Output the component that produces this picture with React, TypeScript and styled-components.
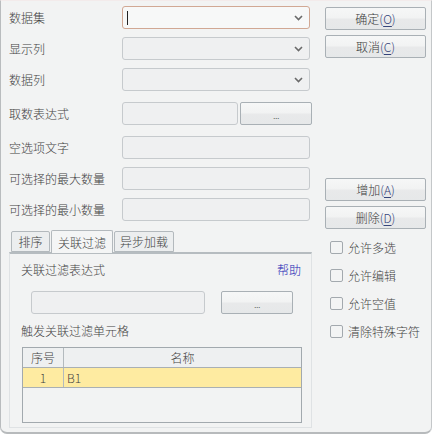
import React from "react";
import styled, { createGlobalStyle, css } from "styled-components";

const Global = createGlobalStyle`
  html, body { margin: 0; padding: 0; background: #ffffff; }
  body { font-family: "Noto Sans CJK SC", "Noto Sans", sans-serif; }
  * { box-sizing: border-box; }
`;

const Window = styled.div`
  width: 432px;
  height: 434px;
  background: #f2f3f3;
  border-left: 1px solid #b9bcbe;
  border-right: 1px solid #c4c7c9;
  border-bottom: 2px solid #b7babc;
  border-top: 1px solid #f3ebeb;
  border-radius: 0 0 7px 7px;
  display: grid;
  grid-template-columns: 311px 119px;
  font-size: 12px;
  font-weight: 300;
  color: #424242;
  overflow: hidden;
`;

const LeftCol = styled.div`
  width: 311px;
  padding-left: 8px;
  display: flex;
  flex-direction: column;
`;

const Row = styled.div<{ $top: number }>`
  display: grid;
  grid-template-columns: 113px 188px;
  align-items: center;
  height: 23px;
  margin-top: ${(p) => p.$top}px;
`;

const Label = styled.span`
  line-height: 23px;
  white-space: nowrap;
`;

const fieldBase = css`
  height: 23px;
  border: 1px solid #c6cacd;
  border-radius: 3px;
  background: #eff0f1;
`;

const SelectBox = styled.div<{ $focus?: boolean }>`
  ${fieldBase}
  position: relative;
  display: flex;
  align-items: center;
  justify-content: flex-end;
  padding-right: 6px;
  ${(p) =>
    p.$focus &&
    css`
      border-color: #d1a894;
      background: #f7f8f8;
    `}
`;

const Caret = styled.span`
  position: absolute;
  left: 4px;
  top: 4px;
  width: 1px;
  height: 14px;
  background: #222;
`;

const TextBox = styled.div<{ $w?: number }>`
  ${fieldBase}
  width: ${(p) => (p.$w ? `${p.$w}px` : "100%")};
  flex-shrink: 0;
`;

const SplitField = styled.div`
  display: flex;
  align-items: center;
  gap: 2px;
`;

const Btn = styled.div<{ $w: number }>`
  width: ${(p) => p.$w}px;
  height: 23px;
  flex-shrink: 0;
  border: 1px solid #a9b0b5;
  border-radius: 2px;
  background: linear-gradient(#f6f7f7 0%, #f2f3f3 45%, #e8e9ea 55%, #e6e8e9 100%);
  display: flex;
  align-items: center;
  justify-content: center;
  font-size: 12px;
  color: #3a3a3a;
  line-height: 1;
`;

const Dots = styled.span`
  font-size: 10px;
  color: #555;
  margin-top: 2px;
  letter-spacing: -0.5px;
`;

const Key = styled.span`
  color: #36457a;
`;

const U = styled.span`
  text-decoration: underline;
  text-underline-offset: 2px;
`;

const Tabs = styled.div`
  display: flex;
  align-items: flex-end;
  margin-top: 9px;
  padding-left: 2px;
  height: 22px;
  position: relative;
  z-index: 1;
`;

const Tab = styled.div<{ $active?: boolean; $w: number }>`
  width: ${(p) => p.$w}px;
  height: ${(p) => (p.$active ? 23 : 21)}px;
  margin-right: 1px;
  border: 1px solid #b3b9bd;
  border-bottom: ${(p) => (p.$active ? "none" : "1px solid #b3b9bd")};
  background: ${(p) => (p.$active ? "#f4f5f5" : "#eceeef")};
  display: flex;
  align-items: center;
  justify-content: center;
  font-size: 12px;
  margin-bottom: ${(p) => (p.$active ? "-1px" : "0")};
  border-radius: 2px 2px 0 0;
`;

const Panel = styled.div`
  width: 303px;
  height: 176px;
  border: 1px solid #dfe2e4;
  border-top: 2px solid #b6bcc0;
  padding: 5px 11px 0 11px;
  display: flex;
  flex-direction: column;
`;

const PanelHead = styled.div`
  width: 280px;
  display: flex;
  justify-content: space-between;
  align-items: center;
  height: 20px;
`;

const HelpLink = styled.span`
  color: #2424b4;
`;

const PanelFieldRow = styled.div`
  display: flex;
  align-items: center;
  gap: 16px;
  margin-top: 12px;
  padding-left: 10px;
`;

const SubLabel = styled.div`
  margin-top: 8px;
  height: 18px;
  line-height: 18px;
`;

const Table = styled.div`
  margin-top: 7px;
  margin-left: 1px;
  width: 280px;
  height: 76px;
  border: 1px solid #a2a9ae;
  display: flex;
  flex-direction: column;
  flex-shrink: 0;
`;

const TRow = styled.div<{ $head?: boolean; $sel?: boolean }>`
  display: grid;
  grid-template-columns: 41px 1fr;
  height: 20px;
  border-bottom: 1px solid #a9b0b4;
  background: ${(p) => (p.$head ? "#eef0f1" : p.$sel ? "#feeba1" : "transparent")};
`;

const Cell = styled.div<{ $center?: boolean; $first?: boolean }>`
  display: flex;
  align-items: center;
  justify-content: ${(p) => (p.$center ? "center" : "flex-start")};
  padding-left: ${(p) => (p.$center ? 0 : 3)}px;
  border-right: ${(p) => (p.$first ? "1px solid #b3babe" : "none")};
  font-size: 12px;
`;

const RightCol = styled.div`
  display: flex;
  flex-direction: column;
  padding-left: 13px;
`;

const BtnStack = styled.div<{ $top: number }>`
  display: flex;
  flex-direction: column;
  gap: 5px;
  margin-top: ${(p) => p.$top}px;
`;

const CheckList = styled.div`
  display: flex;
  flex-direction: column;
  gap: 14px;
  margin-top: 11px;
  padding-left: 5px;
`;

const CheckRow = styled.label`
  display: flex;
  align-items: center;
  gap: 5px;
  height: 14px;
  font-size: 12px;
  white-space: nowrap;
`;

const Box = styled.span`
  width: 13px;
  height: 13px;
  border: 1px solid #a3a9ae;
  border-radius: 2px;
  background: #f3f4f4;
`;

const Chevron = () => (
  <svg width="9" height="6" viewBox="0 0 9 6">
    <path d="M1 1 L4.5 4.5 L8 1" fill="none" stroke="#6a6a6a" strokeWidth="1.6" />
  </svg>
);

export default function App() {
  return (
    <>
      <Global />
      <Window>
        <LeftCol>
          <Row $top={5}>
            <Label>数据集</Label>
            <SelectBox $focus>
              <Caret />
              <Chevron />
            </SelectBox>
          </Row>
          <Row $top={8}>
            <Label>显示列</Label>
            <SelectBox>
              <Chevron />
            </SelectBox>
          </Row>
          <Row $top={8}>
            <Label>数据列</Label>
            <SelectBox>
              <Chevron />
            </SelectBox>
          </Row>
          <Row $top={11}>
            <Label>取数表达式</Label>
            <SplitField>
              <TextBox $w={116} />
              <Btn $w={72}>
                <Dots>...</Dots>
              </Btn>
            </SplitField>
          </Row>
          <Row $top={11}>
            <Label>空选项文字</Label>
            <TextBox />
          </Row>
          <Row $top={8}>
            <Label>可选择的最大数量</Label>
            <TextBox />
          </Row>
          <Row $top={8}>
            <Label>可选择的最小数量</Label>
            <TextBox />
          </Row>
          <Tabs>
            <Tab $w={39}>排序</Tab>
            <Tab $w={62} $active>
              关联过滤
            </Tab>
            <Tab $w={60}>异步加载</Tab>
          </Tabs>
          <Panel>
            <PanelHead>
              <span>关联过滤表达式</span>
              <HelpLink>帮助</HelpLink>
            </PanelHead>
            <PanelFieldRow>
              <TextBox $w={174} />
              <Btn $w={72}>
                <Dots>...</Dots>
              </Btn>
            </PanelFieldRow>
            <SubLabel>触发关联过滤单元格</SubLabel>
            <Table>
              <TRow $head>
                <Cell $center $first>
                  序号
                </Cell>
                <Cell $center>名称</Cell>
              </TRow>
              <TRow $sel>
                <Cell $center $first>
                  1
                </Cell>
                <Cell>B1</Cell>
              </TRow>
            </Table>
          </Panel>
        </LeftCol>
        <RightCol>
          <BtnStack $top={6}>
            <Btn $w={101}>
              确定
              <Key>
                (<U>O</U>)
              </Key>
            </Btn>
            <Btn $w={101}>
              取消
              <Key>
                (<U>C</U>)
              </Key>
            </Btn>
          </BtnStack>
          <BtnStack $top={120}>
            <Btn $w={101}>
              增加
              <Key>
                (<U>A</U>)
              </Key>
            </Btn>
            <Btn $w={101}>
              删除
              <Key>
                (<U>D</U>)
              </Key>
            </Btn>
          </BtnStack>
          <CheckList>
            <CheckRow>
              <Box />
              允许多选
            </CheckRow>
            <CheckRow>
              <Box />
              允许编辑
            </CheckRow>
            <CheckRow>
              <Box />
              允许空值
            </CheckRow>
            <CheckRow>
              <Box />
              清除特殊字符
            </CheckRow>
          </CheckList>
        </RightCol>
      </Window>
    </>
  );
}
